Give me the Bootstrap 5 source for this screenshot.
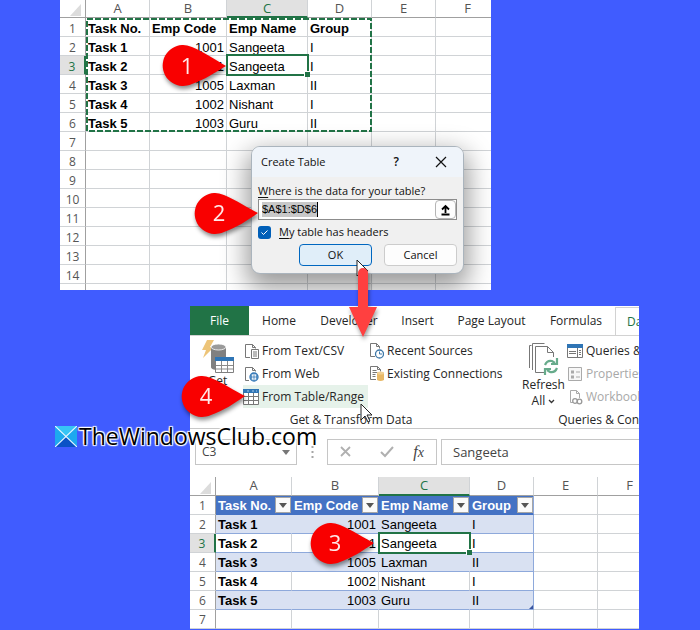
<!DOCTYPE html>
<html lang="en">
<head>
<meta charset="utf-8">
<meta name="viewport" content="width=device-width, initial-scale=1">
<title>Create Table from Range</title>
<link href="https://cdn.jsdelivr.net/npm/bootstrap@5.3.0/dist/css/bootstrap.min.css" rel="stylesheet">
<style>
:root{--ui:"Open Sans","Noto Sans",sans-serif;--xl:#217346}
body{background:#405cff;font-family:var(--ui);font-size:12px;line-height:18px;color:#262626}
.stage{min-height:630px}
.sheet-top{margin:0 209px 16px 60px;background:#fff}
.sheet-bottom{margin:0 61px 0 190px;background:#fff}
/* worksheets */
.grid{table-layout:fixed;border-collapse:separate;border-spacing:0;font:13px/16px "Liberation Sans",Arial,sans-serif;color:#000}
.grid th,.grid td{height:19px;padding:2px 2px 0;border-right:1px solid #d0d3d6;border-bottom:1px solid #d0d3d6;white-space:nowrap;position:relative}
.grid .no{width:26px;text-align:center;font:12px/16px var(--ui);color:#555;border-right-color:#a0a0a0;padding:1px 0 0}
.grid thead th{text-align:center;font:13px/14px var(--ui);color:#555;border-bottom-color:#a0a0a0;padding:0 0 2px}
.grid .on{background:#e1e1e1;color:var(--xl)}
.grid thead .on{border-bottom:2px solid var(--xl);padding-bottom:1px}
.grid tbody .on{border-right:2px solid var(--xl)}
.grid .num{text-align:right}
.grid tbody .key{font-weight:700}
.picked::before{content:"";position:absolute;inset:-2px -2px -2px -1px;border:2px solid var(--xl);z-index:1}
.picked::after{content:"";position:absolute;right:-3px;bottom:-3px;width:6px;height:6px;background:var(--xl);border:solid #fff;border-width:1px 0 0 1px;z-index:2}
.grid-a{width:calc(100% + 9px)}
.grid-a tbody td{line-height:15px;padding-top:3px}
.grid-a tbody .no{line-height:15px;padding-top:2px}
.grid-a thead th{height:18px}
.grid-b{width:calc(100% + 23px)}
.corner{display:block;margin:0 0 0 auto}
.filled td{border-bottom-color:#8ea9db}
.band td.t{background:#d9e1f2;border-right-color:#d9e1f2}
.grid-b td.edge{border-right-color:#8ea9db!important}
.filled td:not(.t){border-color:#d0d3d6}
.heads td.t{background:#4472c4;border-color:#4472c4;color:#fff;font-weight:700}
.drop{width:16px;height:16px;right:0;top:1px;padding:0;border:1px solid #a6a6a6;background:#fafafa;z-index:1}
.drop svg{display:block;margin:auto}
/* dialog */
.dlg{left:251px;top:146px;width:213px;background:#f0f0f0;border:1px solid #aab4bd;border-radius:9px;box-shadow:0 10px 26px 4px rgba(0,0,0,.4);color:#111;font-size:11px;line-height:16px;overflow:hidden}
.clip{inset:0 209px auto 0;height:290px;overflow:hidden}
.dlg-head{height:30px;background:#eff4fa;padding:0 16px 0 9px}
.dlg-body{padding:6px 6px 7px}
.dlg-body u{text-underline-offset:2px}
.plain{border:0;background:none;padding:0;line-height:1;color:#111}
.help{font-size:12px;font-weight:600}
.ref{height:21px;border:1px solid #8c8c8c;background:#fff}
.ref input{min-width:0;border:0;padding:0;width:56px;margin-left:3px;background:#c8c8c8;font:11px/15px "Liberation Sans",Arial,sans-serif;height:15px;outline:0;border-right:1px solid #000}
.pick{width:21px;border:1px solid #b5b5b5;border-radius:4px;background:#fdfdfd;padding:0}
.tick{appearance:none;width:13px;height:13px;margin:0;border-radius:3px;background:#005fb8 url("data:image/svg+xml,%3Csvg xmlns='http://www.w3.org/2000/svg' viewBox='0 0 13 13'%3E%3Cpath d='M3.5 6.5l2 2 4-4' fill='none' stroke='white'/%3E%3C/svg%3E")}
.act{width:73px;height:22px;border:1px solid #ccc;border-radius:4px;background:#fdfdfd;padding:0;color:#111}
.act-main{border-color:#0067c0;background:#e0eef9}
/* ribbon */
.tabs{display:grid;grid-template-columns:59px 60px 80px 57px 91px 78px 1fr;height:30px;border-bottom:1px solid #d2d2d2}
.tabs a{color:#262626;text-decoration:none;text-align:center;line-height:30px;height:29px;white-space:nowrap;font-size:12px;overflow:hidden}
.tabs .file{background:var(--xl);color:#fff}
.tabs .cur{height:30px;margin-top:1px;line-height:28px;background:#fff;border:1px solid #d2d2d2;border-width:1px 0 0 1px;text-align:left;padding-left:11px;color:var(--xl)}
.ribbon{height:93px;padding-top:3px;border-bottom:1px solid #c8c8c8;white-space:nowrap;overflow:hidden}
.cmd{display:flex;align-items:center;gap:3px;height:23px;padding:0;border:0;background:none;color:#262626;font-size:12px;line-height:18px}
.cmd-in{padding-left:2px}
.cmd svg,.bigcmd svg{flex:none}
.cmd:disabled{color:#a8a8a8}
.hot{background:#e6f2ea}
.bigcmd{border:0;background:none;padding:0;color:#262626;line-height:16px}
.getcol{width:53px;line-height:12px;padding:0 0 22px 2px}
.col-a{width:125px}.col-b{width:140px}.refcol{width:47px}
.caption-row{line-height:22px;height:20px;text-align:center}
.rule-v{width:1px;height:84px;background:#a0a0a0}
/* formula bar */
.fbar{padding:10px 0 12px 5px}
.fbox{height:26px;border:1px solid #c6c6c6;background:#fff;color:#444}
.namebox{width:102px;padding:0 6px}
.dots{width:30px}
.fxbox{width:110px}
.fx{font:italic 16px/20px "Liberation Serif",serif}
.fin{min-width:0;border-right:0;padding:0 11px;font-size:13px;border-radius:0;outline:0}
/* annotations */
.mark-pin{width:68px;height:56px;filter:drop-shadow(1px 3px 2px rgba(0,0,0,.45))}
.mark-pin text{font:22px var(--ui);fill:#ffe9e9;text-anchor:middle}
.pin1{left:162px;top:40px}.pin2{left:194px;top:188px}.pin3{left:310px;top:518px}.pin4{left:181px;top:371px}
.ants{left:86px;top:17px}
.arrow{left:345px;top:264px;filter:drop-shadow(1px 3px 2px rgba(0,0,0,.4))}
.cur1{left:356px;top:259px}.cur2{left:360px;top:403px}
.brand{left:55px;top:420px;gap:2px;font-size:23px;line-height:32px;color:#000;text-shadow:0 0 2px #fff,1px 1px 1px #fff,-1px -1px 1px #fff,1px -1px 1px #fff,-1px 1px 1px #fff}
.over{z-index:5}
</style>
<script src="https://cdn.jsdelivr.net/npm/bootstrap@5.3.0/dist/js/bootstrap.bundle.min.js"></script>
</head>
<body>
<main class="stage position-relative overflow-hidden">

<section class="sheet-top overflow-hidden" aria-label="Source range">
<table class="grid grid-a">
<colgroup><col style="width:26px"><col style="width:64px"><col style="width:77px"><col style="width:81px"><col style="width:64px"><col style="width:64px"><col></colgroup>
<thead><tr><th class="no"><svg class="corner" width="15" height="14"><path d="M11 2v12H0z" fill="#dcdcdc"/></svg></th><th>A</th><th>B</th><th class="on">C</th><th>D</th><th>E</th><th>F</th></tr></thead>
<tbody>
<tr><th class="no">1</th><td class="key">Task No.</td><td class="key">Emp Code</td><td class="key">Emp Name</td><td class="key">Group</td><td></td><td></td></tr>
<tr><th class="no">2</th><td class="key">Task 1</td><td class="num">1001</td><td>Sangeeta</td><td>I</td><td></td><td></td></tr>
<tr><th class="no on">3</th><td class="key">Task 2</td><td class="num">1001</td><td class="picked">Sangeeta</td><td>I</td><td></td><td></td></tr>
<tr><th class="no">4</th><td class="key">Task 3</td><td class="num">1005</td><td>Laxman</td><td>II</td><td></td><td></td></tr>
<tr><th class="no">5</th><td class="key">Task 4</td><td class="num">1002</td><td>Nishant</td><td>I</td><td></td><td></td></tr>
<tr><th class="no">6</th><td class="key">Task 5</td><td class="num">1003</td><td>Guru</td><td>II</td><td></td><td></td></tr>
<tr><th class="no">7</th><td></td><td></td><td></td><td></td><td></td><td></td></tr>
<tr><th class="no">8</th><td></td><td></td><td></td><td></td><td></td><td></td></tr>
<tr><th class="no">9</th><td></td><td></td><td></td><td></td><td></td><td></td></tr>
<tr><th class="no">10</th><td></td><td></td><td></td><td></td><td></td><td></td></tr>
<tr><th class="no">11</th><td></td><td></td><td></td><td></td><td></td><td></td></tr>
<tr><th class="no">12</th><td></td><td></td><td></td><td></td><td></td><td></td></tr>
<tr><th class="no">13</th><td></td><td></td><td></td><td></td><td></td><td></td></tr>
<tr><th class="no">14</th><td></td><td></td><td></td><td></td><td></td><td></td></tr>
</tbody></table>
<svg width="100%" height="6" class="d-block"><path d="M25.500 0v6" stroke="#a0a0a0"/><path d="M89.500 0v6M166.500 0v6M247.500 0v6M311.500 0v6M375.500 0v6" stroke="#d0d3d6"/></svg>
</section>

<svg class="ants position-absolute" width="288" height="118" aria-hidden="true"><rect x="1" y="2" width="284" height="112" fill="none" stroke="#217346" stroke-width="2" stroke-dasharray="6 2"/></svg>

<div class="clip position-absolute">
<form class="dlg position-absolute" role="dialog" aria-labelledby="dlgTitle">
<div class="dlg-head d-flex align-items-center">
<span id="dlgTitle" class="flex-grow-1">Create Table</span>
<button type="button" class="plain help me-4 pe-2" aria-label="Help">?</button>
<button type="button" class="plain ms-1" aria-label="Close"><svg class="d-block" width="12" height="12"><path d="M1 1l10 10M11 1L1 11" stroke="#111" stroke-width="1.200"/></svg></button>
</div>
<div class="dlg-body">
<label for="rng" class="d-block"><u>W</u>here is the data for your table?</label>
<div class="ref d-flex align-items-center justify-content-between mb-1">
<input id="rng" value="$A$1:$D$6">
<button type="button" class="pick align-self-stretch" aria-label="Collapse dialog"><svg class="d-block mx-auto" width="11" height="12"><path d="M5.500 9V2M2 5.500l3.500-3.500L9 5.500M1.500 10.500h8" fill="none" stroke="#000" stroke-width="1.800"/></svg></button>
</div>
<div class="d-flex align-items-center gap-2 mb-1"><input class="tick" type="checkbox" id="hd" checked><label for="hd"><u>M</u>y table has headers</label></div>
<div class="d-flex justify-content-end gap-2"><button type="button" class="act act-main me-1">OK</button><button type="button" class="act">Cancel</button></div>
</div>
</form>
</div>

<section class="sheet-bottom overflow-hidden" aria-label="Workbook with table">
<nav class="tabs overflow-hidden"><a class="file" href="#">File</a><a href="#">Home</a><a href="#">Developer</a><a href="#">Insert</a><a href="#">Page Layout</a><a href="#">Formulas</a><a class="cur" href="#">Data</a></nav>
<div class="ribbon d-flex">
<div>
<div class="d-flex">
<button class="bigcmd getcol"><svg class="d-block mx-auto" width="34" height="36" viewBox="0 0 34 36"><path d="M6 1h7l-4 7h4L2 19l3-8H1z" fill="#edc478"/><path d="M10 8v20c0 2 3 3 6 3V18h9V8z" fill="#808080"/><ellipse cx="17.500" cy="8" rx="7.500" ry="3" fill="#9a9a9a" stroke="#fff" stroke-width=".8"/><path d="M14.500 18.500h18v15h-18z" fill="#fff" stroke="#7f7f7f"/><path d="M14 18h19v4H14z" fill="#2f75b5"/><path d="M20.500 22v11M26.500 22v11M15 26.500h17M15 30h17" stroke="#8b8b8b"/></svg>Get</button>
<div class="col-a">
<button class="cmd cmd-in"><svg width="14" height="16" viewBox="0 0 14 16"><path d="M5 14.500H.500v-13h7l3 3v1" fill="none" stroke="#777"/><path d="M7.500 1.500v3h3" fill="none" stroke="#777"/><path d="M6.500 6.500h7v9h-7z" fill="#fff" stroke="#777"/><path d="M8 9h4M8 11h4M8 13h4" stroke="#777"/></svg>From Text/CSV</button>
<button class="cmd cmd-in"><svg width="14" height="16" viewBox="0 0 14 16"><path d="M4 14.500H.500v-13h7l3 3v1M7.500 1.500v3h3" fill="none" stroke="#777"/><circle cx="9" cy="11" r="4" fill="#fff" stroke="#2f75b5" stroke-width="1.300"/><path d="M5 11h8M9 7v8M7 8q-1.500 3 0 6M11 8q1.500 3 0 6" fill="none" stroke="#2f75b5" stroke-width=".8"/></svg>From Web</button>
<button class="cmd hot w-100"><svg width="16" height="16" viewBox="0 0 16 16"><path d="M.500.500h15v15H.500z" fill="#fff" stroke="#777"/><path d="M0 0h16v4H0z" fill="#2f75b5"/><path d="M4 2h2M9 2h2M13 2h1" stroke="#a9cbe8"/><path d="M5.500 4v11M10.500 4v11M1 7.500h14M1 11.500h14" stroke="#777"/></svg>From Table/Range</button>
</div>
<div class="col-b">
<button class="cmd cmd-in"><svg width="14" height="16" viewBox="0 0 14 16"><path d="M5 13.500H.500V.500h6l3 3v2M6.500.500v3h3" fill="none" stroke="#777"/><circle cx="9.500" cy="11" r="4" fill="#fff" stroke="#3f78a8" stroke-width="1.300"/><path d="M9.500 8.500V11H12" fill="none" stroke="#3f78a8"/></svg>Recent Sources</button>
<button class="cmd cmd-in"><svg width="14" height="16" viewBox="0 0 14 16"><path d="M6 13.500H.500V.500h7l3 3v2M7.500.500v3h3M2.500 4.500h4M2.500 6.500h5M2.500 8.500h3M2.500 10.500h3" fill="none" stroke="#777"/><path d="M7 7v7q3.500 2 7 0V7z" fill="#e8b866"/><ellipse cx="10.500" cy="7" rx="3.500" ry="1.500" fill="#f1cf92"/></svg>Existing Connections</button>
</div>
</div>
<div class="caption-row ps-1">Get &amp; Transform Data</div>
</div>
<div class="rule-v ms-1"></div>
<div class="ms-2">
<div class="d-flex">
<button class="bigcmd refcol"><svg class="d-block mx-auto mt-1" width="31" height="34" viewBox="0 0 31 34"><path d="M1.500 27V4.500h2M4.500 29V2.500h12M17.500 31.500h-10V5.500h12l6 6V16M19.500 5.500v6h6" transform="translate(0 -2)" fill="none" stroke="#777"/><path d="M17 22q2-5 7-4l3 2M29 15v6h-6M29 25q-2 5-7 4l-3-2M17 32v-6h6" fill="none" stroke="#67ab8b" stroke-width="2.200"/></svg><span class="d-block">Refresh</span>All <svg width="7" height="6"><path d="M1 1l2.500 2.500L6 1" fill="none" stroke="#333" stroke-width="1.300"/></svg></button>
<div>
<button class="cmd"><svg width="16" height="14" viewBox="0 0 16 14"><path d="M.500.500h15v13H.500z" fill="#fff" stroke="#777"/><path d="M0 0h16v4H0z" fill="#2f75b5"/><path d="M10.500 4v9M2 7.500h7M2 9.500h7M12 6.500h2M12 8.500h2M12 10.500h2" stroke="#777"/></svg>Queries &amp; Connections</button>
<button class="cmd" disabled><svg width="16" height="16" viewBox="0 0 16 16"><path d="M1.500 1.500h13v13h-13z" fill="#f7f7f7" stroke="#aaa"/><path d="M4 4.500h3v3H4zM4 9.500h3v3H4z" fill="#aaa"/><path d="M9 6h4M9 11h4" stroke="#aaa"/></svg>Properties</button>
<button class="cmd" disabled><svg width="16" height="16" viewBox="0 0 16 16"><path d="M6 13.500H3.500v-12h6l3 3V9M9.500 1.500v3h3" fill="none" stroke="#aaa"/><circle cx="8" cy="12" r="2.300" fill="none" stroke="#999" stroke-width="1.300"/><circle cx="12.500" cy="12.500" r="2.300" fill="none" stroke="#999" stroke-width="1.300"/></svg>Workbook Links</button>
</div>
</div>
<div class="caption-row ps-2 ms-4 text-start">&nbsp; Queries &amp; Connections</div>
</div>
</div>

<div class="fbar d-flex">
<div class="fbox namebox d-flex align-items-center justify-content-between"><span>C3</span><svg width="8" height="5"><path d="M0 0h8L4 5z" fill="#777"/></svg></div>
<div class="dots d-flex align-items-center justify-content-center"><svg width="3" height="14"><path d="M1.500 1v13" stroke="#a5a5a5" stroke-width="2" stroke-dasharray="2 3"/></svg></div>
<div class="fbox fxbox d-flex align-items-center justify-content-between px-2 me-1"><svg class="ms-1" width="12" height="12"><path d="M1 1l9 9M10 1l-9 9" stroke="#b0b0b0" stroke-width="1.800"/></svg><svg class="ms-2" width="14" height="12"><path d="M1 6l4 4L13 1" fill="none" stroke="#b0b0b0" stroke-width="2"/></svg><span class="fx me-1">f<small>x</small></span></div>
<input class="fbox fin flex-grow-1" aria-label="Formula bar" value="Sangeeta">
</div>

<table class="grid grid-b">
<colgroup><col style="width:26px"><col style="width:76px"><col style="width:87px"><col style="width:91px"><col style="width:64px"><col style="width:64px"><col></colgroup>
<thead><tr><th class="no"><svg class="corner" width="15" height="14"><path d="M11 2v12H0z" fill="#dcdcdc"/></svg></th><th>A</th><th>B</th><th class="on">C</th><th>D</th><th>E</th><th>F</th></tr></thead>
<tbody>
<tr class="heads"><th class="no">1</th>
<td class="t">Task No.<button class="drop position-absolute" aria-label="Filter Task No."><svg width="8" height="5"><path d="M0 0h8L4 5z" fill="#555"/></svg></button></td>
<td class="t">Emp Code<button class="drop position-absolute" aria-label="Filter Emp Code"><svg width="8" height="5"><path d="M0 0h8L4 5z" fill="#555"/></svg></button></td>
<td class="t">Emp Name<button class="drop position-absolute" aria-label="Filter Emp Name"><svg width="8" height="5"><path d="M0 0h8L4 5z" fill="#555"/></svg></button></td>
<td class="t edge">Group<button class="drop position-absolute" aria-label="Filter Group"><svg width="8" height="5"><path d="M0 0h8L4 5z" fill="#555"/></svg></button></td><td></td><td></td></tr>
<tr class="filled band"><th class="no">2</th><td class="t key">Task 1</td><td class="t num">1001</td><td class="t">Sangeeta</td><td class="t edge">I</td><td></td><td></td></tr>
<tr class="filled"><th class="no on">3</th><td class="t key">Task 2</td><td class="t num">1001</td><td class="t picked">Sangeeta</td><td class="t edge">I</td><td></td><td></td></tr>
<tr class="filled band"><th class="no">4</th><td class="t key">Task 3</td><td class="t num">1005</td><td class="t">Laxman</td><td class="t edge">II</td><td></td><td></td></tr>
<tr class="filled"><th class="no">5</th><td class="t key">Task 4</td><td class="t num">1002</td><td class="t">Nishant</td><td class="t edge">I</td><td></td><td></td></tr>
<tr class="filled band"><th class="no">6</th><td class="t key">Task 5</td><td class="t num">1003</td><td class="t">Guru</td><td class="t edge">II<svg class="position-absolute bottom-0 end-0" width="4" height="4"><path d="M4 0v4H0z" fill="#3b559f"/></svg></td><td></td><td></td></tr>
<tr><th class="no">7</th><td></td><td></td><td></td><td></td><td></td><td></td></tr>
</tbody></table>
</section>

<svg class="cur1 over position-absolute" width="14" height="20"><path d="M1 1v16l4-4 3 6 2-1-3-6h5z" fill="#fff" stroke="#222"/></svg>
<svg class="arrow over position-absolute" width="36" height="76"><path d="M13 9a5 5 0 0 1 10 0v34h9L18 73 4 43h9z" fill="#ff4040"/></svg>
<svg class="cur2 over position-absolute" width="14" height="20"><path d="M1 1v16l4-4 3 6 2-1-3-6h5z" fill="#fff" stroke="#222"/></svg>

<svg class="mark-pin pin1 over position-absolute" viewBox="0 0 68 56"><path d="M30 7C42 12 54 20 64 26 54 32 42 40 30 44A20.500 20.500 0 1 1 30 7z" fill="#f90000"/><text x="25" y="34">1</text></svg>
<svg class="mark-pin pin2 over position-absolute" viewBox="0 0 68 56"><path d="M30 7C42 12 54 20 64 25 54 32 42 40 30 44A20.500 20.500 0 1 1 30 7z" fill="#f90000"/><text x="25" y="33">2</text></svg>
<svg class="mark-pin pin3 over position-absolute" viewBox="0 0 68 56"><path d="M30 7C42 12 54 20 64 25 54 32 42 40 30 44A20.500 20.500 0 1 1 30 7z" fill="#f90000"/><text x="25" y="33">3</text></svg>
<svg class="mark-pin pin4 over position-absolute" viewBox="0 0 68 56"><path d="M30 7C42 12 54 20 64 25 54 32 42 40 30 44A20.500 20.500 0 1 1 30 7z" fill="#f90000"/><text x="25" y="33">4</text></svg>

<div class="brand over position-absolute d-flex align-items-center"><svg width="22" height="21" viewBox="0 0 22 21"><path d="M0 0h22v21H0z" fill="#1da9ef"/><path d="M0 0h22L11 10.500z" fill="#37c5f5"/><path d="M0 21h22L11 10.500z" fill="#0a52c6"/><path d="M0 0l22 21M22 0L0 21" stroke="#e8f6ff" stroke-width="1.200"/></svg><span>TheWindowsClub.com</span></div>
</main>
</body>
</html>
